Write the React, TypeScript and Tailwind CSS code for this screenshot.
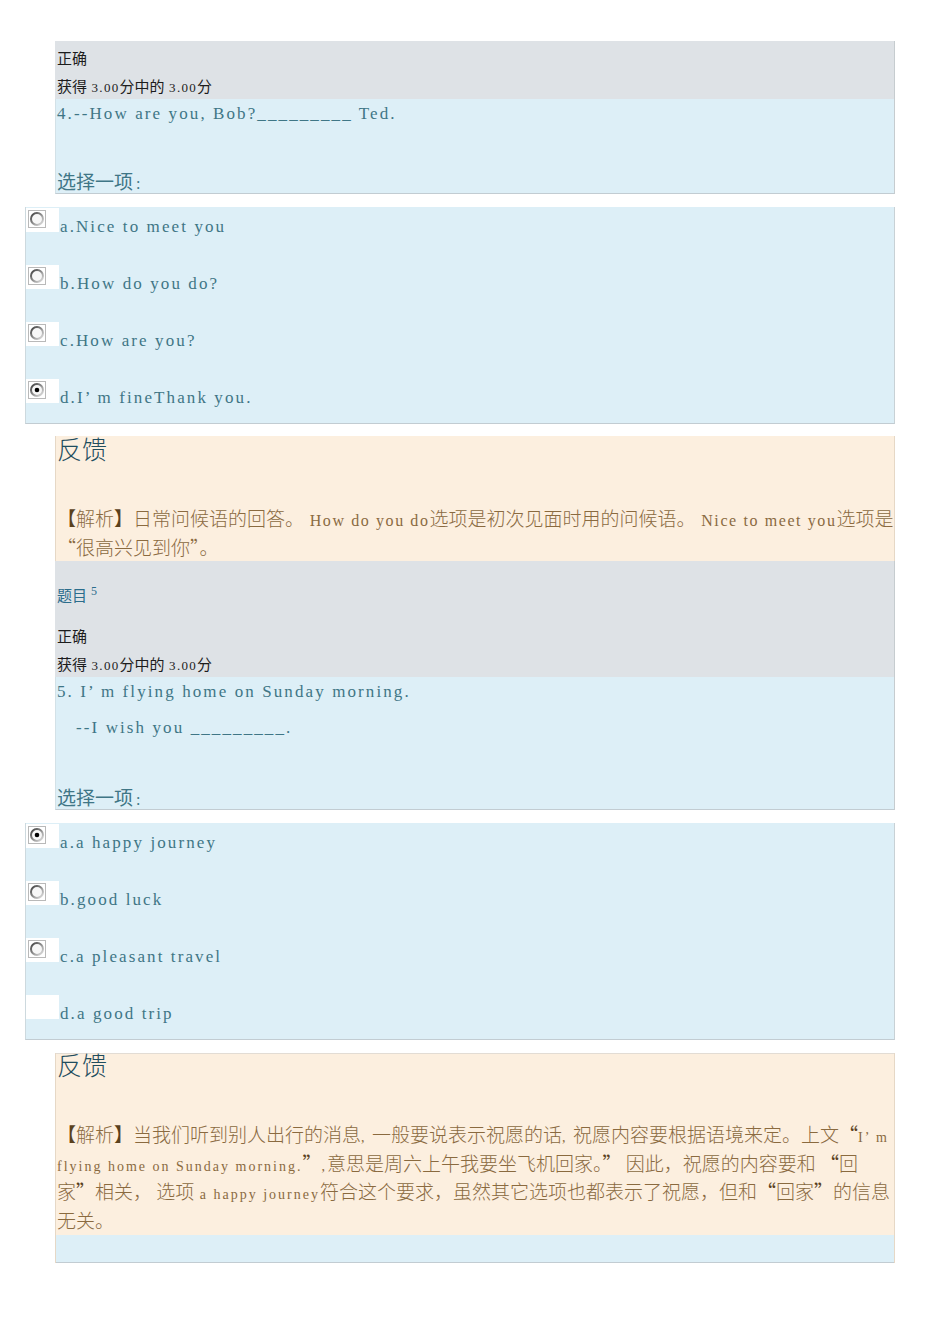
import React, { useId } from "react";

const Q = "text-[#3f7686]";

function Radio({ checked }: { checked: boolean }) {
  const raw = useId();
  const id = "g" + raw.replace(/[^a-zA-Z0-9]/g, "");
  return (
    <svg width="18" height="18" viewBox="0 0 18 18">
      <defs>
        <linearGradient id={id} x1="0" y1="0" x2="1" y2="1">
          <stop offset="0" stopColor="#3c3c3c" />
          <stop offset="0.5" stopColor="#8e8e8e" />
          <stop offset="1" stopColor="#e6e6e6" />
        </linearGradient>
      </defs>
      <rect x="0.5" y="0.5" width="17" height="17" fill="#fff" stroke="#b9b9b9" />
      <circle cx="9" cy="9" r="6" fill="#f7f7f7" stroke={`url(#${id})`} strokeWidth="2" />
      {checked && <circle cx="9" cy="9" r="2.3" fill="#000" />}
    </svg>
  );
}

function Choice({ text, state }: { text: string; state: "on" | "off" | "none" }) {
  return (
    <div className="flex h-[44px]">
      <div className="w-[33px] h-[24px] bg-white pl-[2px] pt-[2px]">
        {state !== "none" && <Radio checked={state === "on"} />}
      </div>
      <span
        className={`ml-[1px] mt-[6px] leading-[26px] text-[17px] tracking-[2.1px] whitespace-pre font-[family-name:'Liberation_Serif',serif] ${Q}`}
      >
        {text}
      </span>
    </div>
  );
}

function Choices({ items }: { items: { text: string; state: "on" | "off" | "none" }[] }) {
  return (
    <div className="ml-[25px] mt-[13px] w-[870px] h-[217px] bg-[#ddeff7] border-l border-r border-b border-l-[#cdd9de] border-r-[#c8d1d5] border-b-[#c2ccd2] pt-[1px] flex flex-col gap-[13.5px]">
      {items.map((it, i) => (
        <Choice key={i} text={it.text} state={it.state} />
      ))}
    </div>
  );
}

function Num({ children }: { children: React.ReactNode }) {
  return (
    <span className="text-[13px] leading-none tracking-[1.3px] whitespace-pre font-[family-name:'Liberation_Serif',serif]">
      {children}
    </span>
  );
}

function Header({ title }: { title?: boolean }) {
  return (
    <>
      {title && (
        <div className="leading-[28px] text-[15px] text-[#2b6d8c]">
          题目
          <span className="text-[12px] leading-none align-super ml-[4px] font-[family-name:'Liberation_Serif',serif]">5</span>
        </div>
      )}
      <div className={`leading-[28px] text-[15px] text-[#1c1c1c] ${title ? "mt-[13px]" : ""}`}>正确</div>
      <div className="leading-[28px] text-[15px] text-[#1c1c1c]">
        获得<Num> 3.00</Num>分中的<Num> 3.00</Num>分
      </div>
    </>
  );
}

function Pick() {
  return (
    <div className={`mt-auto -mb-[2px] leading-[28px] text-[19px] ${Q}`}>
      选择一项
      <span className="ml-[3px] text-[16px] leading-none font-[family-name:'Liberation_Serif',serif]">:</span>
    </div>
  );
}

function L16({ children }: { children: React.ReactNode }) {
  return (
    <span className="text-[16px] leading-none tracking-[1.6px] whitespace-pre font-normal font-[family-name:'Liberation_Serif',serif]">
      {children}
    </span>
  );
}

function L14({ children }: { children: React.ReactNode }) {
  return (
    <span className="text-[14px] leading-none tracking-[2px] whitespace-pre font-normal font-[family-name:'Liberation_Serif',serif]">
      {children}
    </span>
  );
}

function B({ children }: { children: React.ReactNode }) {
  return <span className="text-[#5a411d] font-normal">{children}</span>;
}

export default function App() {
  return (
    <div className="w-[950px] min-h-[1344px] bg-white pt-[41px] font-[family-name:'Noto_Sans_CJK_SC',sans-serif]">
      {/* Question 4 */}
      <div className="ml-[55px] w-[840px] border-r border-[#c6cccf]">
        <div className="h-[58px] bg-[#dee2e6] pt-[3px] pl-[2px]">
          <Header />
        </div>
        <div className="h-[95px] bg-[#ddeff7] border-b border-l border-b-[#c2ccd2] border-l-[#d3e1e7] pl-[1px] flex flex-col">
          <div
            className={`text-[17px] leading-[30px] tracking-[2.1px] whitespace-pre font-[family-name:'Liberation_Serif',serif] ${Q}`}
          >
            4.--How are you, Bob?_________ Ted.
          </div>
          <Pick />
        </div>
      </div>

      <Choices
        items={[
          { text: "a.Nice to meet you", state: "off" },
          { text: "b.How do you do?", state: "off" },
          { text: "c.How are you?", state: "off" },
          { text: "d.I’ m fineThank you.", state: "on" },
        ]}
      />

      {/* Feedback 4 */}
      <div className="ml-[55px] mt-[12px] w-[840px] h-[125px] bg-[#fcefdf] border-l border-r border-[#e6d8c6] pl-[1px]">
        <div className="text-[25px] font-light text-[#1f4d5e] leading-[24px]">反馈</div>
        <div className="mt-[43px] text-[19px] leading-[29px] whitespace-nowrap text-[#8a6a3f] font-light">
          <div>
            <B>【</B>解析<B>】</B>日常问候语的回答。<L16> How do you do</L16>选项是初次见面时用的问候语。
            <L16> Nice to meet you</L16>选项是
          </div>
          <div>“很高兴见到你”。</div>
        </div>
      </div>

      {/* Question 5 */}
      <div className="ml-[55px] w-[840px] border-r border-[#c6cccf]">
        <div className="h-[116px] bg-[#dee2e6] pt-[20px] pl-[2px]">
          <Header title />
        </div>
        <div className="h-[133px] bg-[#ddeff7] border-b border-l border-b-[#c2ccd2] border-l-[#d3e1e7] pl-[1px] flex flex-col">
          <div
            className={`text-[17px] leading-[30px] tracking-[2.1px] whitespace-pre font-[family-name:'Liberation_Serif',serif] ${Q}`}
          >
            5. I’ m flying home on Sunday morning.
          </div>
          <div
            className={`mt-[6px] pl-[19px] text-[17px] leading-[30px] tracking-[2.1px] whitespace-pre font-[family-name:'Liberation_Serif',serif] ${Q}`}
          >
            --I wish you _________.
          </div>
          <Pick />
        </div>
      </div>

      <Choices
        items={[
          { text: "a.a happy journey", state: "on" },
          { text: "b.good luck", state: "off" },
          { text: "c.a pleasant travel", state: "off" },
          { text: "d.a good trip", state: "none" },
        ]}
      />

      {/* Feedback 5 */}
      <div className="ml-[55px] mt-[13px] w-[840px] border-l border-r border-[#e6d8c6]">
        <div className="h-[182px] bg-[#fcefdf] border-t border-[#e2dcd4] pl-[1px]">
          <div className="text-[25px] font-light text-[#1f4d5e] leading-[20px]">反馈</div>
          <div className="mt-[46px] text-[19px] leading-[28.7px] whitespace-nowrap text-[#8a6a3f] font-light">
            <div>
              <B>【</B>解析<B>】</B>当我们听到别人出行的消息<L14>, </L14>一般要说表示祝愿的话<L14>, </L14>
              祝愿内容要根据语境来定。上文<B>“</B>
              <L14>I’ m</L14>
            </div>
            <div>
              <L14>flying home on Sunday morning.</L14>
              <B>”</B>
              <L14>,</L14>意思是周六上午我要坐飞机回家。<B>”</B> 因此，祝愿的内容要和 <B>“</B>回
            </div>
            <div>
              家<B>”</B>相关， 选项<L14> a happy journey</L14>符合这个要求，虽然其它选项也都表示了祝愿，但和<B>“</B>回家
              <B>”</B>的信息
            </div>
            <div>无关。</div>
          </div>
        </div>
        <div className="h-[28px] bg-[#ddeff7] border-b border-[#c2ccd2]" />
      </div>
    </div>
  );
}
